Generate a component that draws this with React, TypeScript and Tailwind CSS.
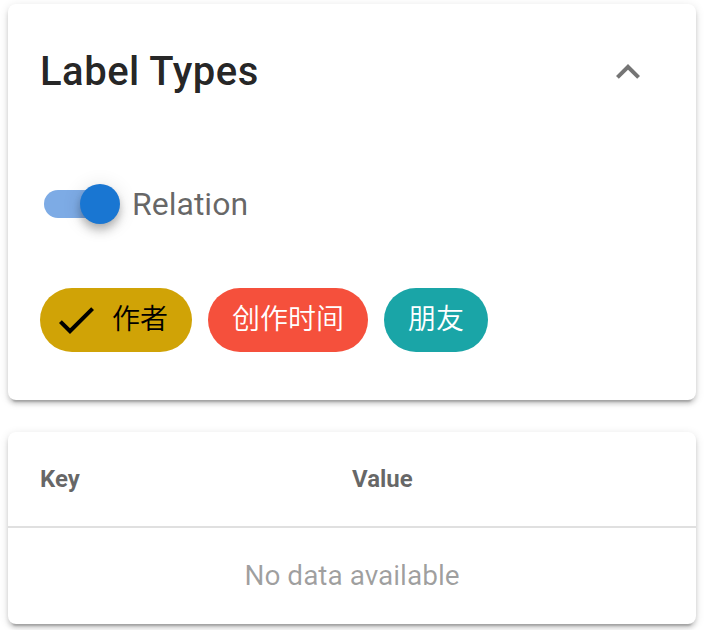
import { useState } from "react";

const chips = [
  { text: "作者", color: "bg-[#d0a306] text-black" },
  { text: "创作时间", color: "bg-[#f5503c] text-white" },
  { text: "朋友", color: "bg-[#1aa5a7] text-white" },
];

const card =
  "rounded-lg bg-white shadow-[0_6px_2px_-4px_rgba(0,0,0,0.2),0_4px_4px_rgba(0,0,0,0.14),0_2px_10px_rgba(0,0,0,0.12)]";

export default function App() {
  const [open, setOpen] = useState(true);
  const [relation, setRelation] = useState(true);
  const [selected, setSelected] = useState(0);

  return (
    <main className="flex flex-col gap-8 px-2 pt-1 pb-1.5 font-[Roboto,'Noto_Sans_CJK_SC',sans-serif]">
      <section className={card}>
        <header className="flex items-center justify-between pt-8 pr-11 pl-8">
          <h2 className="text-[40px] leading-[72px] font-medium tracking-[0.5px] text-black/87">Label Types</h2>
          <button type="button" aria-label="Toggle label types" aria-expanded={open} onClick={() => setOpen(!open)}>
            <svg viewBox="0 0 24 24" className={open ? "size-12" : "size-12 rotate-180"} fill="#757575">
              <path d="M7.41 15.41 12 10.83l4.59 4.58L18 14l-6-6-6 6z" />
            </svg>
          </button>
        </header>
        {open && (
          <div className="px-8 pt-16 pb-12">
            <label className="flex h-16 w-fit items-center gap-3 pl-1">
              <span className="relative flex h-10 w-19 items-center">
                <input
                  type="checkbox"
                  role="switch"
                  checked={relation}
                  onChange={() => setRelation(!relation)}
                  className="peer h-7 w-18 appearance-none rounded-full bg-gray-300 checked:bg-[#7dabe5]"
                />
                <span className="pointer-events-none absolute left-0 size-10 rounded-full bg-white shadow-[0_4px_8px_-2px_rgba(0,0,0,0.2),0_8px_10px_rgba(0,0,0,0.14),0_2px_20px_rgba(0,0,0,0.12)] peer-checked:left-9 peer-checked:bg-[#1976d2]" />
              </span>
              <span className="text-[32px] leading-10 text-black/60">Relation</span>
            </label>
            <div className="flex flex-wrap gap-4 pt-13">
              {chips.map((chip, i) => (
                <button
                  key={chip.text}
                  type="button"
                  aria-pressed={selected === i}
                  onClick={() => setSelected(i)}
                  className={`flex h-16 items-center gap-3 rounded-full text-[28px] font-[350] ${selected === i ? "pr-6 pl-3" : "px-6"} ${chip.color}`}
                >
                  {selected === i && (
                    <svg viewBox="0 0 24 24" className="size-12" fill="currentColor">
                      <path d="M21 7 9 19l-5.5-5.5 1.41-1.41L9 16.17 19.59 5.59z" />
                    </svg>
                  )}
                  {chip.text}
                </button>
              ))}
            </div>
          </div>
        )}
      </section>
      <section className={card}>
        <table className="w-full table-fixed border-separate border-spacing-0 text-left">
          <thead>
            <tr className="h-24 text-2xl text-black/60">
              <th className="border-b-2 border-black/12 px-8 font-bold">Key</th>
              <th className="border-b-2 border-black/12 pr-8 font-bold">Value</th>
            </tr>
          </thead>
          <tbody>
            <tr className="h-24 text-center text-[28px] text-black/38">
              <td colSpan={2}>No data available</td>
            </tr>
          </tbody>
        </table>
      </section>
    </main>
  );
}
